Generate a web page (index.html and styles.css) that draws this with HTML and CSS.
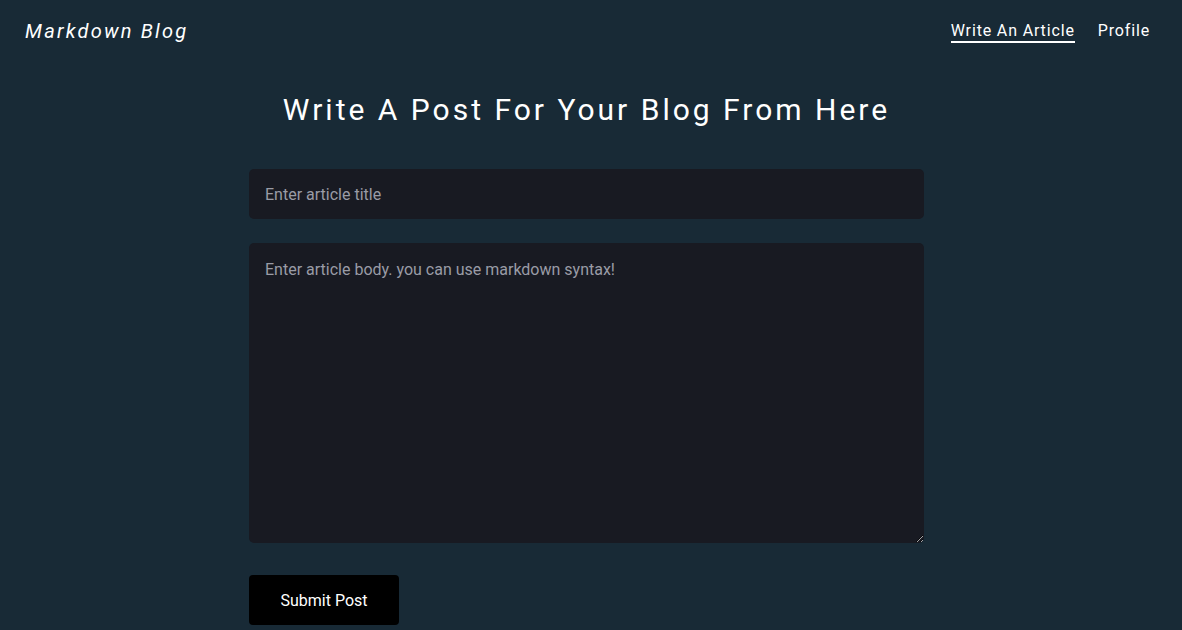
FILE: index.html
```html
<!DOCTYPE html>
<html>
<head>
<meta charset="utf-8">
<link rel="stylesheet" href="styles.css">
</head>
<body>
<header class="topbar">
  <div class="logo">Markdown Blog</div>
  <nav class="nav">
    <a class="nav-link active" href="#">Write An Article</a>
    <a class="nav-link" href="#">Profile</a>
  </nav>
</header>
<main class="main">
  <h1 class="heading">Write A Post For Your Blog From Here</h1>
  <form class="post-form">
    <input class="field title-field" type="text" placeholder="Enter article title">
    <textarea class="field body-field" placeholder="Enter article body. you can use markdown syntax!"></textarea>
    <button class="submit" type="button">Submit Post</button>
  </form>
</main>
</body>
</html>
```

FILE: styles.css
```css
html, body {
  margin: 0;
  padding: 0;
}
body {
  background: #182a36;
  font-family: Roboto, "Liberation Sans", sans-serif;
  color: #ffffff;
  min-height: 630px;
}
.topbar {
  display: flex;
  justify-content: space-between;
  align-items: center;
  height: 62px;
  padding: 0 32px 0 25px;
}
.logo {
  font-style: italic;
  font-size: 20px;
  letter-spacing: 2.2px;
  color: #ffffff;
}
.nav {
  display: flex;
  gap: 23px;
  align-items: center;
  margin-top: 1px;
}
.nav-link {
  color: #ffffff;
  text-decoration: none;
  font-size: 16px;
  letter-spacing: 0.85px;
  padding-bottom: 1px;
  border-bottom: 2px solid transparent;
}
.nav-link.active {
  border-bottom-color: #ffffff;
}
.main {
  display: flex;
  flex-direction: column;
  align-items: center;
  padding-right: 9px;
}
.heading {
  margin: 28px 0 0;
  font-weight: 400;
  font-size: 30px;
  letter-spacing: 3px;
  line-height: 40px;
}
.post-form {
  width: 675px;
  display: flex;
  flex-direction: column;
  margin-top: 39px;
}
.field {
  box-sizing: border-box;
  width: 675px;
  background: #181a22;
  border: none;
  border-radius: 5px;
  color: #ffffff;
  font-family: Roboto, "Liberation Sans", sans-serif;
  font-size: 16px;
  padding: 0 16px;
  outline: none;
}
.field::placeholder {
  color: #9a9ca6;
}
.title-field {
  height: 50px;
}
.body-field {
  height: 300px;
  margin-top: 24px;
  padding-top: 17px;
  resize: vertical;
  line-height: 20px;
}
.submit {
  margin-top: 32px;
  width: 150px;
  height: 50px;
  background: #000000;
  color: #ffffff;
  border: none;
  border-radius: 4px;
  font-family: Roboto, "Liberation Sans", sans-serif;
  font-size: 16px;
}
```
